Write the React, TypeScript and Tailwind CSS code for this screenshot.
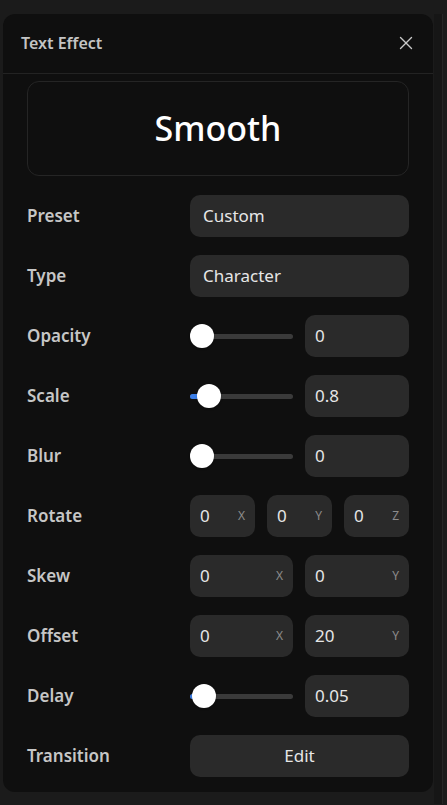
import { X } from "lucide-react";

type Field = {
  label: string;
  kind: "text" | "slider" | "axis3" | "axis2" | "button";
  value?: string;
  fraction?: number;
  axes?: { value: string; axis: string }[];
};

const fields: Field[] = [
  { label: "Preset", kind: "text", value: "Custom" },
  { label: "Type", kind: "text", value: "Character" },
  { label: "Opacity", kind: "slider", value: "0", fraction: 0 },
  { label: "Scale", kind: "slider", value: "0.8", fraction: 0.09 },
  { label: "Blur", kind: "slider", value: "0", fraction: 0 },
  {
    label: "Rotate",
    kind: "axis3",
    axes: [
      { value: "0", axis: "X" },
      { value: "0", axis: "Y" },
      { value: "0", axis: "Z" },
    ],
  },
  {
    label: "Skew",
    kind: "axis2",
    axes: [
      { value: "0", axis: "X" },
      { value: "0", axis: "Y" },
    ],
  },
  {
    label: "Offset",
    kind: "axis2",
    axes: [
      { value: "0", axis: "X" },
      { value: "20", axis: "Y" },
    ],
  },
  { label: "Delay", kind: "slider", value: "0.05", fraction: 0.03 },
  { label: "Transition", kind: "button", value: "Edit" },
];

function Slider({ fraction }: { fraction: number }) {
  // thumb is 24px wide, travel is track width minus thumb
  const left = `calc(${fraction} * (100% - 24px))`;
  const fill = `calc(${fraction} * (100% - 24px) + 12px)`;

  return (
    <div className="relative flex h-[42px] items-center">
      <div className="h-[5px] w-full rounded-full bg-[#3a3a3a]" />
      {fraction > 0 ? (
        <div
          className="absolute left-0 h-[5px] rounded-full bg-[#3b7ee8]"
          style={{ width: fill }}
        />
      ) : null}
      <div
        className="absolute h-6 w-6 rounded-full bg-white shadow"
        style={{ left }}
      />
    </div>
  );
}

function AxisInput({ value, axis }: { value: string; axis: string }) {
  return (
    <div className="flex h-[42px] items-center justify-between rounded-[10px] bg-[#2a2a2a] pl-[10px] pr-[10px]">
      <span className="text-[17px] text-[#e6e6e6]">{value}</span>
      <span className="text-[12px] text-[#8c8c8c]">{axis}</span>
    </div>
  );
}

function FieldControl({ field }: { field: Field }) {
  if (field.kind === "text") {
    return (
      <div className="flex h-[42px] items-center rounded-[10px] bg-[#2a2a2a] px-[13px] text-[17px] text-[#e6e6e6]">
        {field.value}
      </div>
    );
  }

  if (field.kind === "button") {
    return (
      <button
        className="flex h-[42px] w-full items-center justify-center rounded-[10px] bg-[#2a2a2a] text-[17px] text-[#e6e6e6]"
        type="button"
      >
        {field.value}
      </button>
    );
  }

  if (field.kind === "slider") {
    return (
      <div className="grid grid-cols-[103px_1fr] gap-3">
        <Slider fraction={field.fraction ?? 0} />
        <div className="flex h-[42px] items-center rounded-[10px] bg-[#2a2a2a] px-[10px] text-[17px] text-[#e6e6e6]">
          {field.value}
        </div>
      </div>
    );
  }

  return (
    <div className={field.kind === "axis3" ? "grid grid-cols-3 gap-3" : "grid grid-cols-[103px_1fr] gap-3"}>
      {field.axes?.map((a) => (
        <AxisInput axis={a.axis} key={a.axis} value={a.value} />
      ))}
    </div>
  );
}

export default function App() {
  return (
    <div
      className="min-h-[805px] w-[447px] bg-[#1b1b1b] pt-[14px]"
      style={{ fontFamily: '"Noto Sans", "Open Sans", sans-serif' }}
    >
      <div className="flex">
        <div className="ml-[3px] h-[778px] w-[430px] overflow-hidden rounded-xl bg-[#0f0f0f]">
          <div className="flex h-[60px] items-center justify-between border-b border-[#232323] pl-[18px] pr-[16px]">
            <p className="-mt-px text-[16px] font-semibold text-[#c4c4c4]">Text Effect</p>
            <X className="-mt-px h-[22px] w-[22px] text-[#c8c8c8]" strokeWidth={1.5} />
          </div>

          <div className="px-6 pt-[7px]">
            <div className="flex h-[95px] items-center justify-center rounded-xl border border-[#252525]">
              <p className="text-[34px] font-medium text-white">Smooth</p>
            </div>

            <div className="mt-[19px] flex flex-col gap-[18px]">
              {fields.map((field) => (
                <div className="grid grid-cols-[163px_1fr] items-center" key={field.label}>
                  <p className="text-[17px] font-semibold text-[#c6c6c6]">{field.label}</p>
                  <FieldControl field={field} />
                </div>
              ))}
            </div>
          </div>
        </div>
        <div className="ml-[1px] h-[790px] w-[9px] border-r border-[#262626] bg-[#161616]" />
      </div>
    </div>
  );
}
